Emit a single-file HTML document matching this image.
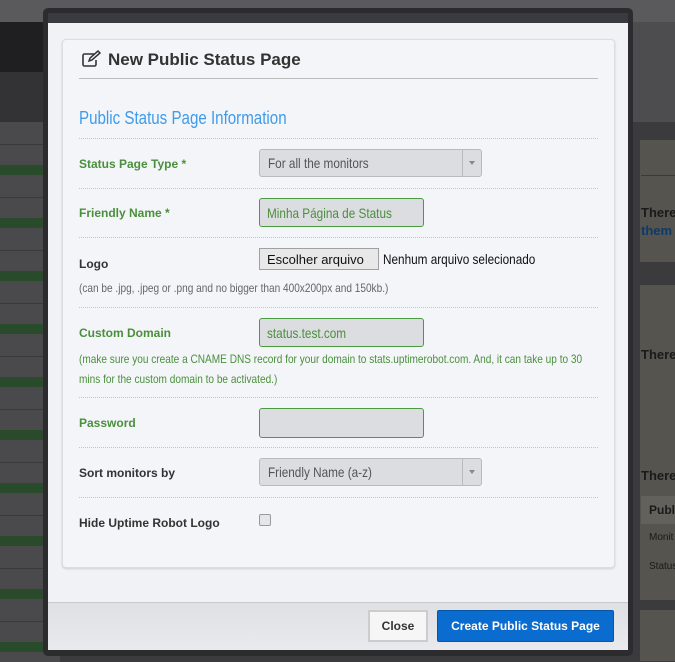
<!DOCTYPE html>
<html><head><meta charset="utf-8"><style>
*{box-sizing:border-box;margin:0;padding:0}
body{width:675px;height:661px;overflow:hidden;position:relative;background:#3b3b3d;font-family:"Liberation Sans",Arial,sans-serif}
.abs{position:absolute}
.n{display:inline-block;transform:scaleX(.84);transform-origin:0 0;white-space:nowrap}
.lbl{position:absolute;left:79px;font-size:12px;font-weight:bold;color:#333}
.g{color:#4a8f3c}
.dl{position:absolute;left:79px;width:519px;border-top:1px dotted #c4c4c4}
.inp{position:absolute;left:259px;background:#dcdde1;border:1px solid #4c9a3f;border-radius:3px;font-size:14px;color:#4a8f3c;padding:6px 7px}
.sel{position:absolute;left:259px;width:223px;height:28px;background:#dcdde1;border:1px solid #b9bac0;border-radius:3px;font-size:14px;color:#555;padding:5px 8px}
.sel:after{content:"";position:absolute;right:0;top:0;width:18px;height:26px;border-left:1px solid #b9bac0}
.sel i{position:absolute;right:6px;top:11px;border:3px solid transparent;border-top:4px solid #888}
</style></head><body>
<div class="abs" style="left:0;top:0;width:675px;height:22px;background:#5a5a5c"></div>
<div class="abs" style="left:0;top:22px;width:60px;height:50px;background:#1f1f21"></div>
<div class="abs" style="left:0;top:72px;width:60px;height:50px;background:#333336"></div>
<div class="abs" style="left:0;top:122px;width:60px;height:540px;background:repeating-linear-gradient(#4a4a4c 0 22px,#3a3a3c 22px 23px,#4a4a4c 23px 43px,#2a4a2c 43px 53px)"></div>
<div class="abs" style="left:633px;top:22px;width:42px;height:100px;background:#4d4d4f"></div>
<div class="abs" style="left:640px;top:140px;width:35px;height:122px;background:#55544e"></div>
<div class="abs" style="left:640px;top:285px;width:35px;height:118px;background:#55544e"></div>
<div class="abs" style="left:640px;top:400px;width:35px;height:200px;background:#55544e"></div>
<div class="abs" style="left:640px;top:610px;width:35px;height:51px;background:#55544e"></div>
<div class="abs" style="left:641px;top:175px;width:34px;border-top:1px solid #3a3a36"></div>
<div class="abs" style="left:641px;top:205px;font-size:13px;font-weight:bold;color:#1a1a1a">There</div>
<div class="abs" style="left:641px;top:223px;font-size:13px;font-weight:bold;color:#0d3a6a">them</div>
<div class="abs" style="left:641px;top:347px;font-size:13px;font-weight:bold;color:#1a1a1a">There</div>
<div class="abs" style="left:641px;top:468px;font-size:13px;font-weight:bold;color:#1a1a1a">There</div>
<div class="abs" style="left:641px;top:496px;width:34px;height:28px;background:#62615b;font-size:12px;font-weight:bold;color:#1a1a1a;padding:7px 8px">Publ</div>
<div class="abs" style="left:649px;top:532px;font-size:10px;color:#1a1a1a">Monit</div>
<div class="abs" style="left:649px;top:561px;font-size:10px;color:#1a1a1a">Status</div>
<div class="abs" style="left:43px;top:8px;width:590px;height:648px;background:#2c2c2e;border-radius:5px"></div>
<div class="abs" style="left:48px;top:13px;width:580px;height:637px;background:#f1f2f6;border-top:10px solid #3a3b40"></div>
<div class="abs" style="left:48px;top:602px;width:580px;height:48px;background:linear-gradient(#dfe0e4,#e9eaee);border-top:1px solid #c8c9cd"></div>
<div class="abs" style="left:62px;top:39px;width:553px;height:529px;background:#f4f5f9;border:1px solid #dcdde2;border-radius:4px;box-shadow:0 1px 2px rgba(0,0,0,.15)"></div>
<svg class="abs" style="left:81px;top:50px" width="20" height="18" viewBox="0 0 20 18"><path d="M13 4H3.5a1.5 1.5 0 0 0-1.5 1.5v9A1.5 1.5 0 0 0 3.5 16h10a1.5 1.5 0 0 0 1.5-1.5V10" fill="none" stroke="#333" stroke-width="1.6"/><path d="M8 11l1-3 8-7 2 2-8 7z" fill="none" stroke="#333" stroke-width="1.5"/></svg>
<div class="abs" style="left:108px;top:50px;font-size:17px;font-weight:bold;color:#333">New Public Status Page</div>
<div class="abs" style="left:79px;top:78px;width:519px;border-top:1px solid #bbb"></div>
<div class="abs" style="left:79px;top:108px;font-size:18px;color:#3e9bea"><span class="n">Public Status Page Information</span></div>
<div class="dl" style="top:138px"></div>
<div class="lbl g" style="top:157px">Status Page Type *</div>
<div class="sel" style="top:149px"><span class="n">For all the monitors</span><i></i></div>
<div class="dl" style="top:188px"></div>
<div class="lbl g" style="top:206px">Friendly Name *</div>
<div class="inp" style="top:198px;width:165px;height:29px"><span class="n">Minha Página de Status</span></div>
<div class="dl" style="top:237px"></div>
<div class="lbl" style="top:257px">Logo</div>
<div class="abs" style="left:259px;top:248px;width:120px;height:22px;background:#e8e8e8;border:1px solid #a0a0a0;font-size:13px;color:#111;padding:3px 7px">Escolher arquivo</div>
<div class="abs" style="left:383px;top:251px;font-size:14px;color:#111"><span class="n">Nenhum arquivo selecionado</span></div>
<div class="abs" style="left:79px;top:281px;font-size:12px;color:#666"><span class="n">(can be .jpg, .jpeg or .png and no bigger than 400x200px and 150kb.)</span></div>
<div class="dl" style="top:307px"></div>
<div class="lbl g" style="top:326px">Custom Domain</div>
<div class="inp" style="top:318px;width:165px;height:29px"><span class="n">status.test.com</span></div>
<div class="abs" style="left:79px;top:349px;font-size:12px;line-height:20px;color:#4a8f3c"><span class="n">(make sure you create a CNAME DNS record for your domain to stats.uptimerobot.com. And, it can take up to 30<br>mins for the custom domain to be activated.)</span></div>
<div class="dl" style="top:397px"></div>
<div class="lbl g" style="top:416px">Password</div>
<div class="inp" style="top:408px;width:165px;height:30px"></div>
<div class="dl" style="top:447px"></div>
<div class="lbl" style="top:466px">Sort monitors by</div>
<div class="sel" style="top:458px"><span class="n">Friendly Name (a-z)</span><i></i></div>
<div class="dl" style="top:497px"></div>
<div class="lbl" style="top:516px">Hide Uptime Robot Logo</div>
<div class="abs" style="left:259px;top:514px;width:12px;height:12px;border:1px solid #999;border-radius:2px;background:#e6e6e8"></div>
<div class="abs" style="left:368px;top:610px;width:60px;height:32px;background:#f6f6f6;border:2px solid #ccc;font-size:12px;font-weight:bold;color:#333;text-align:center;line-height:28px">Close</div>
<div class="abs" style="left:437px;top:610px;width:177px;height:32px;background:#0a6ccf;border:1px solid #0656a8;border-radius:2px;font-size:12px;font-weight:bold;color:#fff;text-align:center;line-height:30px">Create Public Status Page</div>
</body></html>
